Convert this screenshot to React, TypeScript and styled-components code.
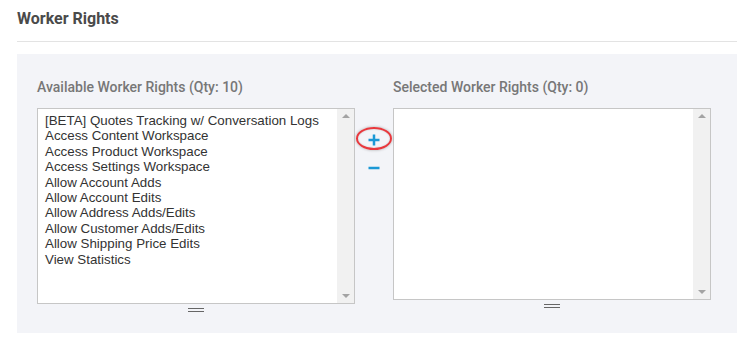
import React from "react";
import styled, { createGlobalStyle } from "styled-components";

const Global = createGlobalStyle`
  html, body { margin: 0; padding: 0; background: #ffffff; }
  body { font-family: Roboto, "Liberation Sans", Arial, sans-serif; }
`;

const Page = styled.div`
  padding: 0 10px 0 17px;
  width: 720px;
`;

const Title = styled.h2`
  margin: 0;
  padding-top: 9px;
  box-sizing: border-box;
  font-family: Roboto, sans-serif;
  font-weight: 700;
  font-size: 16px;
  line-height: 19px;
  color: #4a4a4a;
  border-bottom: 1px solid #e3e3e3;
  height: 42px;
`;

const Panel = styled.div`
  margin-top: 12px;
  background: #f3f4f8;
  height: 279px;
  box-sizing: border-box;
  padding: 20px 26px 0 20px;
  display: grid;
  grid-template-columns: 318px 38px 318px;
`;

const Column = styled.div`
  display: flex;
  flex-direction: column;
`;

const Label = styled.div`
  font-family: Roboto, sans-serif;
  font-weight: 500;
  font-size: 14px;
  line-height: 18px;
  color: #777777;
  height: 34px;
  padding-top: 4px;
  box-sizing: border-box;
`;

const ListBox = styled.div<{ $h: number }>`
  height: ${(p) => p.$h}px;
  box-sizing: border-box;
  border: 1px solid #c6c6c6;
  background: #ffffff;
  display: flex;
`;

const Items = styled.ul`
  flex: 1;
  list-style: none;
  margin: 0;
  padding: 4px 7px;
  font-family: "Liberation Sans", Arial, sans-serif;
  font-size: 13.33px;
  line-height: 15.4px;
  color: #333333;
`;

const Item = styled.li`
  white-space: nowrap;
`;

const Scrollbar = styled.div`
  width: 17px;
  background: #f1f1f1;
  display: flex;
  flex-direction: column;
  justify-content: space-between;
  align-items: center;
  padding: 5px 0;
  box-sizing: border-box;
`;

const Arrow = styled.div<{ $down?: boolean }>`
  width: 0;
  height: 0;
  border-left: 4px solid transparent;
  border-right: 4px solid transparent;
  ${(p) =>
    p.$down
      ? "border-top: 4px solid #a3a3a3;"
      : "border-bottom: 4px solid #a3a3a3;"}
`;

const Handle = styled.div`
  align-self: center;
  width: 16px;
  height: 2px;
  border-top: 1px solid #666;
  border-bottom: 1px solid #666;
  margin-top: 4px;
`;

const Buttons = styled.div`
  display: flex;
  flex-direction: column;
  align-items: center;
  padding-top: 56px;
  gap: 8px;
`;

const IconButton = styled.button<{ $ring?: boolean }>`
  position: relative;
  width: 20px;
  height: 20px;
  padding: 0;
  border: none;
  background: transparent;
  display: flex;
  align-items: center;
  justify-content: center;
  cursor: pointer;
  ${(p) =>
    p.$ring &&
    `&::after {
      content: "";
      position: absolute;
      left: -8px;
      top: -3px;
      width: 32px;
      height: 19px;
      border: 2.5px solid #e8383d;
      border-radius: 50%;
      box-shadow: 0 0 3px rgba(0,0,0,0.3), inset 0 0 2px rgba(0,0,0,0.2);
    }`}
`;

const available = [
  "[BETA] Quotes Tracking w/ Conversation Logs",
  "Access Content Workspace",
  "Access Product Workspace",
  "Access Settings Workspace",
  "Allow Account Adds",
  "Allow Account Edits",
  "Allow Address Adds/Edits",
  "Allow Customer Adds/Edits",
  "Allow Shipping Price Edits",
  "View Statistics",
];

export default function App() {
  return (
    <>
      <Global />
      <Page>
        <Title>Worker Rights</Title>
        <Panel>
          <Column>
            <Label>Available Worker Rights (Qty: 10)</Label>
            <ListBox $h={196}>
              <Items>
                {available.map((a) => (
                  <Item key={a}>{a}</Item>
                ))}
              </Items>
              <Scrollbar>
                <Arrow />
                <Arrow $down />
              </Scrollbar>
            </ListBox>
            <Handle />
          </Column>
          <Buttons>
            <IconButton $ring aria-label="Add">
              <svg width="12" height="12" viewBox="0 0 12 12">
                <path d="M6 0.5v11M0.5 6h11" stroke="#1b98d5" strokeWidth="2.5" />
              </svg>
            </IconButton>
            <IconButton aria-label="Remove">
              <svg width="12" height="12" viewBox="0 0 12 12">
                <path d="M0.5 6h11" stroke="#1b98d5" strokeWidth="2.5" />
              </svg>
            </IconButton>
          </Buttons>
          <Column>
            <Label>Selected Worker Rights (Qty: 0)</Label>
            <ListBox $h={192}>
              <Items />
              <Scrollbar>
                <Arrow />
                <Arrow $down />
              </Scrollbar>
            </ListBox>
            <Handle />
          </Column>
        </Panel>
      </Page>
    </>
  );
}
